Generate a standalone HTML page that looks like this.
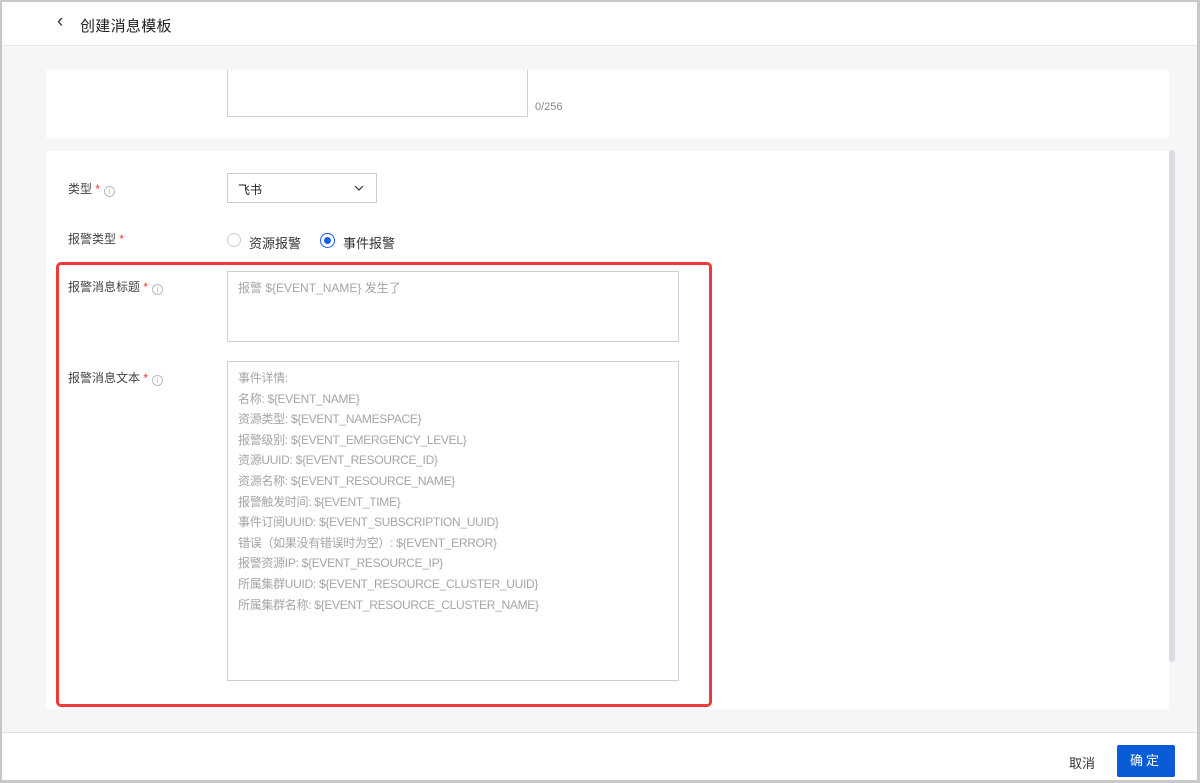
<!DOCTYPE html>
<html><head><meta charset="utf-8"><style>
*{box-sizing:border-box;margin:0;padding:0}
body{width:1200px;height:783px;overflow:hidden;font-family:"Liberation Sans","Noto Sans CJK SC",sans-serif;background:#fff;position:relative}
.frame{position:absolute;left:0;top:0;width:1200px;height:783px;border:2px solid #c8c8c8;border-right-width:3px;border-bottom-width:3px;background:#f5f6f8}
.hdr{position:absolute;left:2px;top:2px;right:3px;height:44px;background:#fff;border-bottom:1px solid #e6e8eb}
.hdr .t{position:absolute;left:78px;top:13px;font-size:15px;color:#222;letter-spacing:0.3px}
.hdr .b{position:absolute;left:55px;top:9px;font-size:19px;color:#333}
.card{position:absolute;left:46px;width:1123px;background:#fff;overflow:hidden}
.lab{position:absolute;font-size:12px;color:#444}
.req{color:#e53935}
.info{display:inline-block;width:11px;height:11px;border:1px solid #bbb;border-radius:50%;vertical-align:-1px;margin-left:4px;font-size:8px;line-height:9px;text-align:center;color:#bbb}
.ta{position:absolute;border:1px solid #d0d0d0;background:#fff}
.ph{color:#a5a5a5;font-size:12px}
.foot{position:absolute;left:2px;right:3px;top:732px;bottom:3px;background:#fff;border-top:1px solid #dde0e4}
</style></head><body>
<div class="frame"></div>
<div class="hdr"><span class="b">&#8249;</span><span class="t">创建消息模板</span></div>
<div class="card" style="top:70px;height:68px">
 <div class="ta" style="left:181px;top:-2px;width:301px;height:49px"></div>
 <div style="position:absolute;left:489px;top:31px;font-size:11px;color:#888">0/256</div>
</div>
<div class="card" style="top:151px;height:558px">
 <div class="lab" style="left:22px;top:29px">类型 <span class="req">*</span><span class="info">i</span></div>
 <div class="ta" style="left:181px;top:22px;width:150px;height:30px;border-color:#ccc"><span style="position:absolute;left:10px;top:7px;font-size:12px;color:#222">飞书</span><svg style="position:absolute;right:12px;top:10px" width="10" height="8"><path d="M1 2l4 4 4-4" stroke="#333" fill="none" stroke-width="1.2"/></svg></div>
 <div class="lab" style="left:22px;top:79px">报警类型 <span class="req">*</span></div>
 <div style="position:absolute;left:181px;top:82px;width:14px;height:14px;border:1px solid #ccc;border-radius:50%"></div>
 <div class="lab" style="left:203px;top:82px;color:#333;font-size:13px">资源报警</div>
 <div style="position:absolute;left:274px;top:82px;width:15px;height:15px;border:1.5px solid #1a5fe0;border-radius:50%"><div style="margin:2.5px;width:7px;height:7px;border-radius:50%;background:#1a5fe0"></div></div>
 <div class="lab" style="left:297px;top:82px;color:#333;font-size:13px">事件报警</div>
 <div class="lab" style="left:22px;top:127px">报警消息标题 <span class="req">*</span><span class="info">i</span></div>
 <div class="ta" style="left:181px;top:120px;width:452px;height:71px"><div class="ph" style="position:absolute;left:10px;top:7px">报警 ${EVENT_NAME} 发生了</div></div>
 <div class="lab" style="left:22px;top:218px">报警消息文本 <span class="req">*</span><span class="info">i</span></div>
 <div class="ta" style="left:181px;top:210px;width:452px;height:320px"><div class="ph" style="position:absolute;left:10px;top:6px;line-height:20.6px;letter-spacing:-0.3px;white-space:pre">事件详情:
名称: ${EVENT_NAME}
资源类型: ${EVENT_NAMESPACE}
报警级别: ${EVENT_EMERGENCY_LEVEL}
资源UUID: ${EVENT_RESOURCE_ID}
资源名称: ${EVENT_RESOURCE_NAME}
报警触发时间: ${EVENT_TIME}
事件订阅UUID: ${EVENT_SUBSCRIPTION_UUID}
错误（如果没有错误时为空）: ${EVENT_ERROR}
报警资源IP: ${EVENT_RESOURCE_IP}
所属集群UUID: ${EVENT_RESOURCE_CLUSTER_UUID}
所属集群名称: ${EVENT_RESOURCE_CLUSTER_NAME}</div></div>
</div>
<div style="position:absolute;left:1169px;top:150px;width:6px;height:512px;background:#dcdde0;border-radius:3px"></div>
<div style="position:absolute;left:56px;top:262px;width:656px;height:445px;border:3px solid #f0393a;border-radius:5px"></div>
<div class="foot">
 <div style="position:absolute;left:1067px;top:20px;font-size:13px;color:#333">取消</div>
 <div style="position:absolute;left:1115px;top:12px;width:58px;height:32px;background:#0a5bd6;border-radius:2px;color:#fff;font-size:13px;text-align:center;line-height:32px;letter-spacing:3px">确定</div>
</div>
</body></html>
